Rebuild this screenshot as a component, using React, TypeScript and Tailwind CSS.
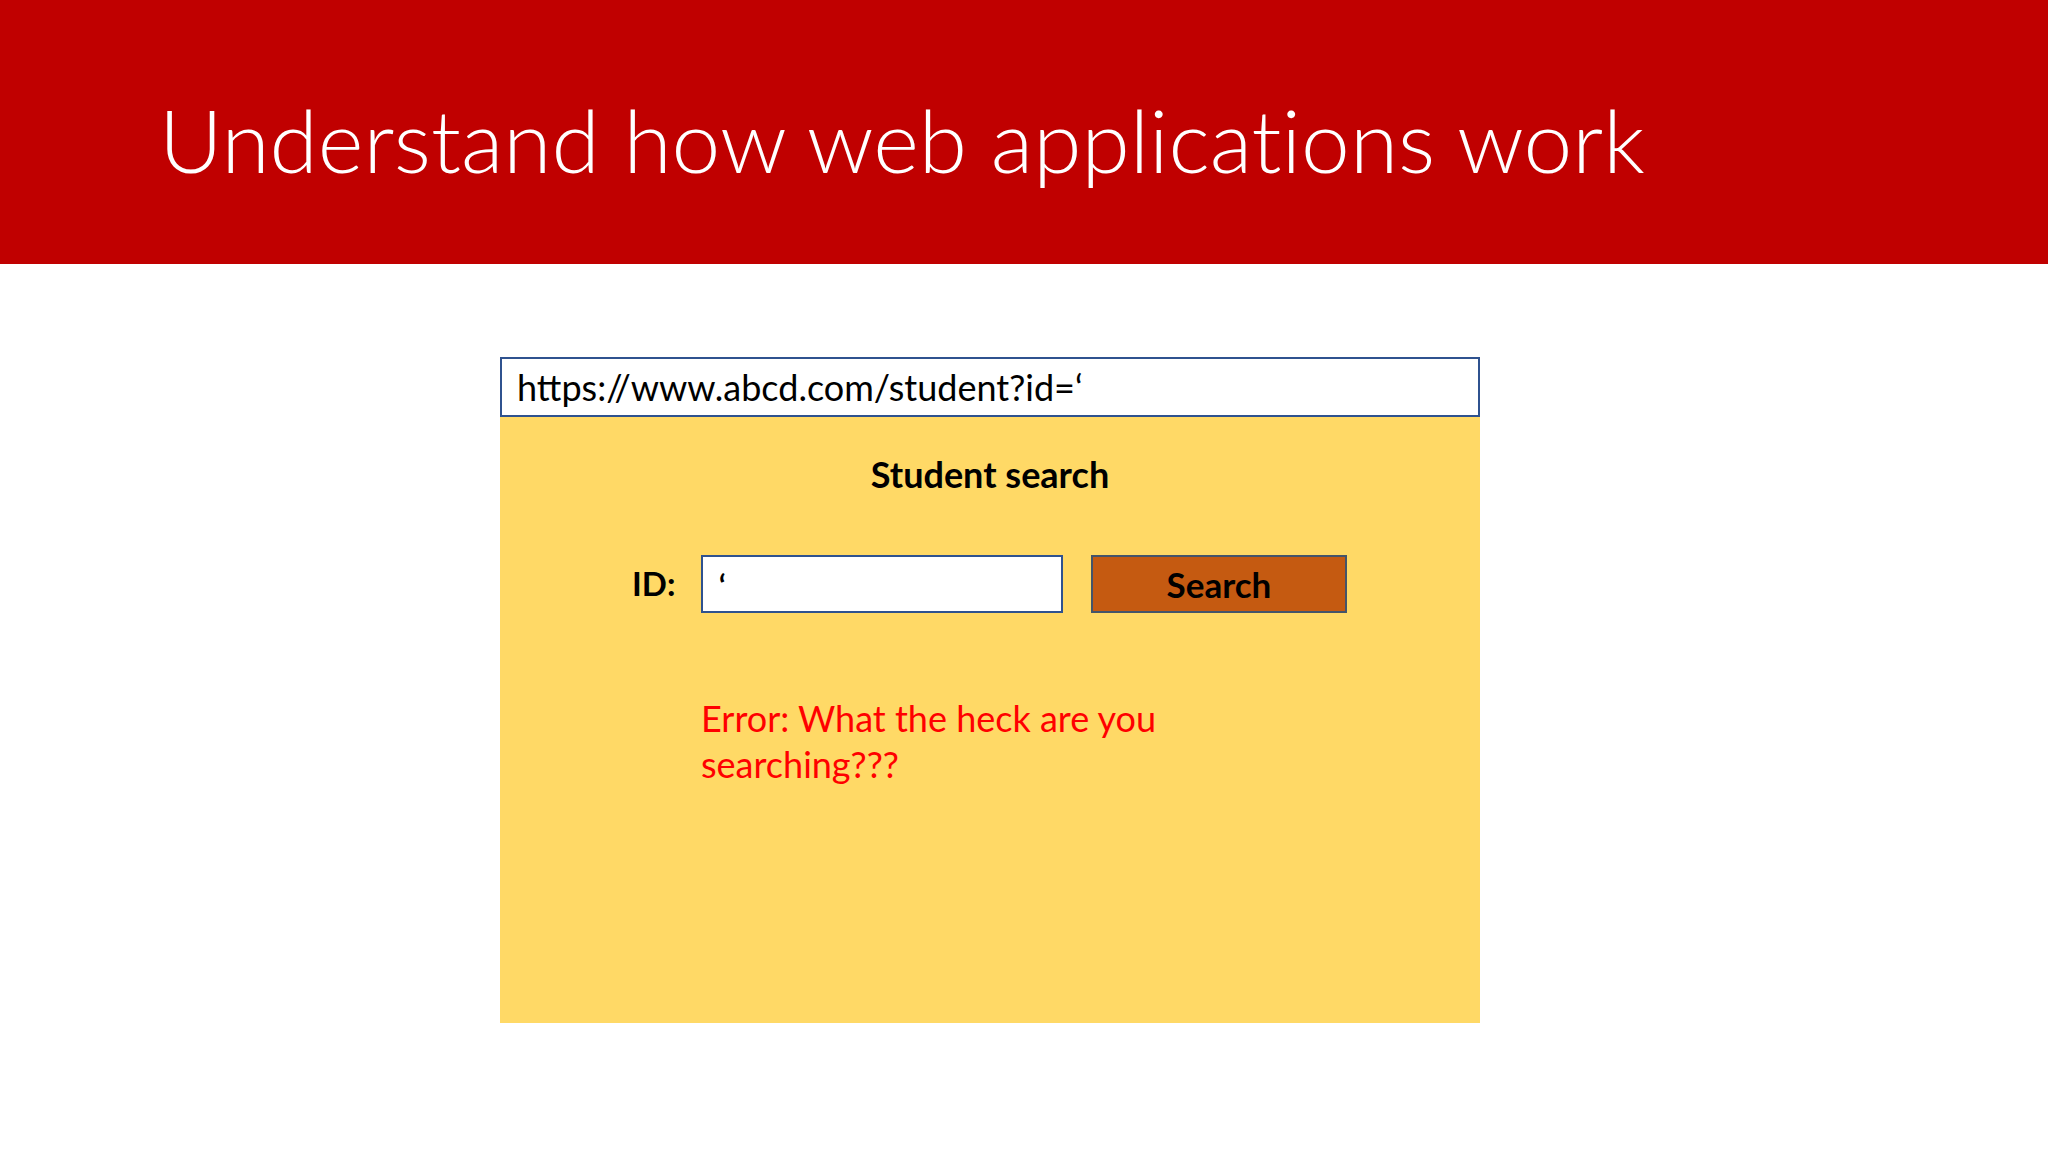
export default function App() {
  return (
    <div className="min-h-[1152px] w-[2048px] bg-white overflow-hidden" style={{ fontFamily: 'Lato, "Open Sans", sans-serif' }}>
      {/* Slide title band */}
      <header className="h-[264px] bg-[#c00000] flex items-start pl-[159px] pt-[85px]">
        <h1 className="text-[87.5px] font-light leading-[110px] text-white [font-variant-ligatures:none]">Understand how web applications work</h1>
      </header>

      <main className="ml-[500px] mt-[93px] w-[980px]">
        {/* Address bar */}
        <div className="h-[60px] border-2 border-[#2f528f] bg-white flex items-center pl-[15px]">
          <span className="text-[36px] text-black">https://www.abcd.com/student?id=‘</span>
        </div>

        {/* Page body */}
        <div className="h-[606px] bg-[#ffd966] flex flex-col">
          <div className="pt-[34px] text-center text-[36px] font-bold leading-[46px] text-black">Student search</div>

          <div className="mt-[58px] flex items-center pl-[132px]">
            <div className="w-[69px] text-[33px] font-bold text-black">ID:</div>
            <div className="w-[362px] h-[58px] bg-white border-2 border-[#2f528f] pl-[16px] pt-[6px] text-[30px] font-bold text-black">‘</div>
            <button className="ml-[28px] w-[256px] h-[58px] bg-[#c55a11] border-2 border-[#44546a] text-[35px] font-bold text-black leading-none">
              Search
            </button>
          </div>

          <p className="mt-[82px] pl-[201px] text-[36px] leading-[46px] text-[#ff0000]">
            Error: What the heck are you
            <br />
            searching???
          </p>
        </div>
      </main>
    </div>
  );
}
